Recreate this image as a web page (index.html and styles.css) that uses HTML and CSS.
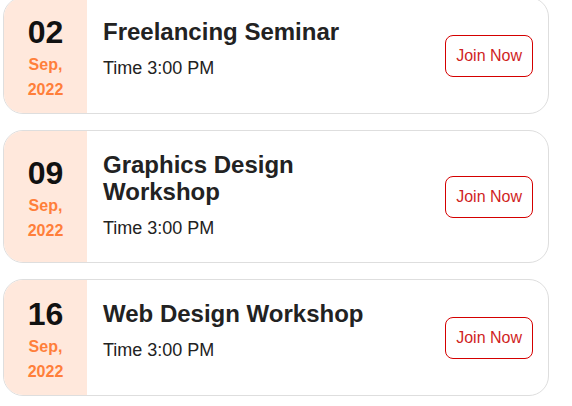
FILE: index.html
```html
<!DOCTYPE html>
<html lang="en">

<head>
    <meta charset="UTF-8">
    <meta name="viewport" content="width=device-width, initial-scale=1.0">
    <title>Events</title>
    <link rel="stylesheet" href="styles.css">
</head>

<body>
    <div class="events">
        <div class="event">
            <div class="date">
                <div class="day">02</div>
                <div class="month">Sep,</div>
                <div class="year">2022</div>
            </div>
            <div class="info">
                <h3 class="title">Freelancing Seminar</h3>
                <p class="time">Time 3:00 PM</p>
            </div>
            <button class="join">Join Now</button>
        </div>

        <div class="event">
            <div class="date">
                <div class="day">09</div>
                <div class="month">Sep,</div>
                <div class="year">2022</div>
            </div>
            <div class="info">
                <h3 class="title">Graphics Design Workshop</h3>
                <p class="time">Time 3:00 PM</p>
            </div>
            <button class="join">Join Now</button>
        </div>

        <div class="event">
            <div class="date">
                <div class="day">16</div>
                <div class="month">Sep,</div>
                <div class="year">2022</div>
            </div>
            <div class="info">
                <h3 class="title">Web Design Workshop</h3>
                <p class="time">Time 3:00 PM</p>
            </div>
            <button class="join">Join Now</button>
        </div>
    </div>
</body>

</html>
```

FILE: styles.css
```css
/* default css */
body {
    margin: 0;
    font-family: "Liberation Sans", Arial, Helvetica, sans-serif;
    background: #fff;
}

/* event list */
.events {
    display: flex;
    flex-direction: column;
    gap: 16px;
    width: 546px;
    margin: -3px 0 0 3px;
}

.event {
    display: flex;
    min-height: 115px;
    border: 1px solid #dedede;
    border-radius: 20px;
    overflow: hidden;
    background: #fff;
}

/* date box */
.date {
    width: 83px;
    flex-shrink: 0;
    display: flex;
    flex-direction: column;
    justify-content: center;
    padding-top: 2px;
    text-align: center;
    background-color: #ffe8dc;
}

.day {
    font-size: 32px;
    line-height: 40px;
    font-weight: bold;
    color: #111;
}

.month,
.year {
    font-size: 16px;
    line-height: 25px;
    font-weight: bold;
    color: #ff7f3a;
}

/* title and time */
.info {
    flex: 1;
    padding: 20px 0 23px 16px;
}

.title {
    max-width: 280px;
    margin: 0 0 12px;
    font-size: 24px;
    line-height: 27px;
    font-weight: bold;
    color: #222;
}

.time {
    margin: 0;
    font-size: 18px;
    line-height: 22px;
    color: #222;
}

/* button */
.join {
    align-self: center;
    height: 42px;
    margin-right: 15px;
    padding: 0 10px;
    font-family: inherit;
    font-size: 16px;
    color: #d01f1f;
    background: #fff;
    border: 1px solid #d40000;
    border-radius: 8px;
    cursor: pointer;
}

.join:hover {
    opacity: 0.7;
}
```
